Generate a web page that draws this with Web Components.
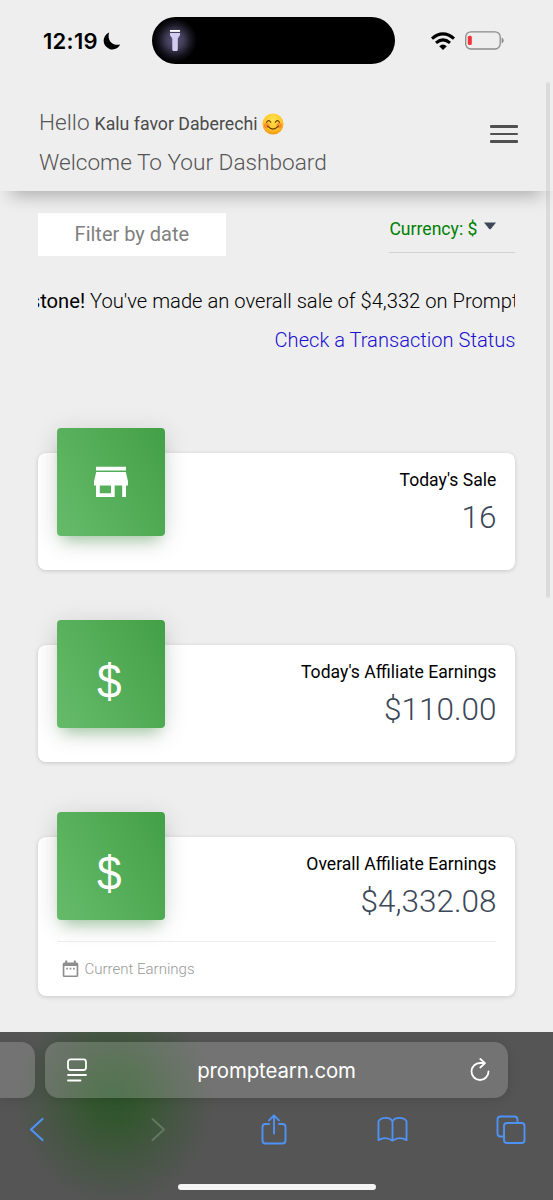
<!DOCTYPE html>
<html lang="en">
<head>
<meta charset="utf-8">
<title>Dashboard</title>
<style>
html,body{margin:0;background:#eee}
body{width:553px;height:1200px;overflow:hidden;font-family:Roboto,"Liberation Sans",sans-serif}
</style>
</head>
<body>
<dash-app></dash-app>
<script>
const define = (name, html) => {
  const t = document.createElement('template');
  t.innerHTML = html;
  customElements.define(name, class extends HTMLElement {
    constructor() {
      super();
      this.attachShadow({ mode: 'open' }).appendChild(t.content.cloneNode(true));
    }
  });
};

define('status-bar', `
<style>
:host{display:flex;box-sizing:border-box;height:82px;align-items:flex-start;padding:17px 49px 0 43px;justify-content:space-between}
.l{display:flex;align-items:center;height:47px;width:109px;gap:5px}
.t{font:600 22px Inter,sans-serif;letter-spacing:.3px;color:#000}
.island{width:243.500px;height:46.500px;border-radius:24px;background:radial-gradient(circle at 23px 23px,#5d5878 0,#403c55 9px,#17151f 16px,#000 22px);display:flex;align-items:center;box-sizing:border-box;padding-left:17px}
.r{display:flex;align-items:center;gap:9px;height:47px;width:109px;justify-content:flex-end}
svg{display:block}
</style>
<div class="l"><span class="t">12:19</span>
<svg width="18" height="18" viewBox="0 0 18 18"><path d="M6.2.6A8.700 8.700 0 1 0 17.200 12.500C10 14.400 3.500 8.500 6.200.6Z" fill="#000"/></svg></div>
<div class="island"><svg width="12" height="23" viewBox="0 0 12 23"><path d="M1 1h10v1.700H1zM1 4h10v2.200L8.800 9.600V20.500q0 1.500-1.400 1.500H4.700q-1.400 0-1.400-1.500V9.600L1 6.200Z" fill="#d2cbf3"/><rect x="1" y="1" width="10" height="1.700" fill="#fff"/></svg></div>
<div class="r">
<svg width="26" height="18" viewBox="0 0 26 18" fill="none" stroke="#000"><path d="M2 6.600Q13-2.700 24 6.600" stroke-width="3.100"/><path d="M6 10.900Q13 5 20 10.900" stroke-width="3.100"/><path d="M9.200 14.200Q13 11 16.800 14.200L13 18Z" fill="#000" stroke="none"/></svg>
<svg width="39" height="19" viewBox="0 0 39 19"><rect x=".7" y=".8" width="34.500" height="17.200" rx="5.200" fill="none" stroke="#8b8b8b" stroke-width="1.300"/><rect x="2.800" y="4.700" width="4" height="9.400" rx="1.500" fill="#f5333a"/><path d="M36.700 6.600q2 1 2 2.900t-2 2.900z" fill="#888"/></svg>
</div>`);

define('page-header', `
<style>
:host{display:flex;box-sizing:border-box;height:109px;justify-content:space-between;padding:20.600px 35px 0 39px;color:#555;position:relative;box-shadow:0 15px 17px -11px rgba(0,0,0,.29)}
.h{font-weight:300;font-size:22.640px;line-height:40px;white-space:nowrap}
.line{display:flex;align-items:baseline;height:40px}
.line b{font-weight:400;font-size:17.720px;margin:0 5px 0 5px;color:#4b4b4b}
.e{align-self:center;margin-top:2px}
svg{display:block}
.m{display:flex;flex-direction:column;gap:5.200px;padding-top:22.600px}
.m i{display:block;width:28px;height:2.400px;border-radius:1px;background:#505050}
</style>
<div class="h"><div class="line"><span>Hello</span><b>Kalu favor Daberechi</b>
<svg class="e" width="22" height="22" viewBox="0 0 22 22"><defs><radialGradient id="g" cx=".5" cy=".3" r=".75"><stop offset="0" stop-color="#ffe34f"/><stop offset=".6" stop-color="#ffc526"/><stop offset="1" stop-color="#ef8c0c"/></radialGradient></defs><circle cx="11" cy="11" r="10.500" fill="url(#g)"/><circle cx="4.800" cy="12.500" r="2.800" fill="#f4652d" opacity=".55"/><circle cx="17.200" cy="12.500" r="2.800" fill="#f4652d" opacity=".55"/><path d="M4.600 9.300Q6.600 5.800 8.700 9.300M13.300 9.300Q15.400 5.800 17.400 9.300M5.600 13.200Q11 18.900 16.400 13.200" fill="none" stroke="#6b3a0b" stroke-width="1.200" stroke-linecap="round"/></svg></div>
<div>Welcome To Your Dashboard</div></div>
<div class="m"><i></i><i></i><i></i></div>`);

define('filter-bar', `
<style>
:host{display:flex;justify-content:space-between;align-items:flex-start;height:43px}
.f{width:188.500px;height:43px;background:#fff;color:#808080;font-size:20px;line-height:42px;text-align:center}
.c{width:126px;height:40px;border-bottom:1.500px solid #d2d2d2;box-sizing:border-box;display:flex;gap:7px;color:#008000;font-size:17.600px;line-height:33px;white-space:nowrap}
svg{margin-top:9px}
</style>
<div class="f">Filter by date</div>
<div class="c"><span>Currency: $</span><svg width="12" height="8" viewBox="0 0 12 8"><path d="M0 .5h12L7 6.800q-1 1-2 0Z" fill="#3c4858"/></svg></div>`);

define('sale-notice', `
<style>
:host{display:block;font-weight:300;font-size:20.180px;color:#000}
.q{display:flex;justify-content:flex-end;overflow:hidden;white-space:nowrap;margin-top:29px;height:32px;line-height:32px}
.q span{margin-right:-3px}
b{font-weight:400}
a{display:block;text-align:right;margin-top:7px;line-height:32px;font-size:20.120px;color:#1a10d0}
</style>
<div class="q"><span><b>stone!</b> You've made an overall sale of $4,332 on Prompt</span></div>
<a>Check a Transaction Status</a>`);

define('stat-card', `
<style>
:host{display:block;box-sizing:border-box;height:117px;border-radius:8px;background:#fff;box-shadow:0 1px 4px rgba(0,0,0,.16);padding:0 19px}
:host([tall]){height:158.500px}
.top{display:flex;justify-content:space-between;height:104px}
.ic{width:108px;height:108px;margin-top:-25px;border-radius:4px;background:linear-gradient(60deg,#66bb6a,#43a047);box-shadow:0 5px 26px rgba(0,0,0,.14),0 10px 13px -6px rgba(76,175,80,.4);display:flex;align-items:center;justify-content:center;color:#fff}
.tx{text-align:right;padding-top:14px;white-space:nowrap}
.k{font-size:17.580px;line-height:27px;color:#000}
.v{font-size:31.500px;line-height:40px;font-weight:300;color:#3c4858;margin-top:4px}
.ft{display:none}
:host([tall]) .ft{display:flex;align-items:center;box-sizing:border-box;border-top:1.500px solid #eee;height:55px;gap:5.500px;padding-left:5.300px;color:#999;font-size:15.050px;font-weight:300}
</style>
<div class="top"><div class="ic"><slot name="icon"></slot></div>
<div class="tx"><div class="k"><slot name="label"></slot></div><div class="v"><slot name="value"></slot></div></div></div>
<div class="ft"><svg width="17" height="18" viewBox="0 0 17 18"><path d="M3.200.5h2v2h6.600v-2h2v2h.9q1.600 0 1.600 1.600v11.300q0 1.600-1.600 1.600H2.300Q.7 17 .7 15.400V4.100Q.7 2.500 2.300 2.500h.9ZM2.400 6v9.400h12.200V6ZM4.200 7.800h1.700v1.700H4.200zM7.600 7.800h1.700v1.700H7.600zM11 7.800h1.700v1.700H11z" fill="#8e8e8e" fill-rule="evenodd"/></svg><slot name="footer"></slot></div>`);

define('store-icon', `
<style>:host{display:block}svg{display:block}</style>
<svg width="36" height="32" viewBox="0 0 36 32"><path d="M3 .7h30v3.800H3zM3.200 6h29.600L35 15.500v4H33V31h-3.800V19.500h-7.500V31H3V19.500H1v-4ZM6.800 19.500V27.200H18V19.500Z" fill="#fff" fill-rule="evenodd"/></svg>`);

define('dollar-icon', `
<style>:host{display:block;font:400 48px/50px "Liberation Sans",Arial,sans-serif;color:#fff;padding-top:15px;margin-left:-2px;transform:scaleX(.92)}</style>$`);

define('browser-bar', `
<style>
:host{display:block;height:168px;box-sizing:border-box;padding-top:10px;background:radial-gradient(ellipse 100px 108px at 115px 66px,#2d552d 0,#34562f 24%,rgba(64,86,61,.8) 58%,rgba(84,84,84,0) 100%),#555}
.tabs{display:flex;gap:10px;height:56px}
.s,.u{background:rgba(255,255,255,.18);box-shadow:0 2px 12px rgba(0,0,0,.12)}
.s{width:35px;border-radius:0 14px 14px 0}
.u{width:463px;border-radius:14px;display:flex;box-sizing:border-box;align-items:center;justify-content:space-between;padding:0 18px 0 22px;color:#fff}
.u span{font:400 20.400px Inter,sans-serif;letter-spacing:-.1px;margin-right:4px}
.b{display:grid;grid-template-columns:121px 111px 115px 119px 30px;align-items:center;padding:0 0 0 30px;height:62px;stroke:#4f92f6;stroke-width:1.900;fill:none;stroke-linecap:round;stroke-linejoin:round}
.home{width:198px;height:6px;border-radius:3px;background:#f4f4f4;margin:24px auto 0}
svg{display:block;overflow:visible}
</style>
<div class="tabs"><div class="s"></div><div class="u">
<svg width="20" height="24" viewBox="0 0 20 24" fill="none" stroke="#fff" stroke-width="1.800" stroke-linecap="round"><rect x="1" y="1.400" width="18" height="10.600" rx="2.500"/><path d="M1 17h18M1 22.500h12.500"/></svg>
<span>promptearn.com</span>
<svg width="20" height="24" viewBox="0 0 20 24" fill="none" stroke="#fff" stroke-width="1.800" stroke-linecap="round" stroke-linejoin="round"><path d="M18.500 13.500A8.500 8.500 0 1 1 10 5h4.500M10.300 1l4.700 4.200-4.700 4.300"/></svg>
</div></div>
<div class="b">
<svg width="14" height="23" viewBox="0 0 14 23"><path d="M12.500 1 1 11.500 12.500 22" stroke-width="2.200"/></svg>
<svg width="14" height="23" viewBox="0 0 14 23"><path d="M1.500 1 13 11.500 1.500 22" stroke="#627861"/></svg>
<svg width="24" height="31" viewBox="1 0 24 31"><path d="M8 10H4.500Q1.500 10 1.500 13V26.500q0 3 3 3h17q3 0 3-3V13q0-3-3-3H18M13 19.500V1.500M8 6.300l5-5 5 5"/></svg>
<svg width="31" height="27" viewBox="0 0 32 27"><path d="M16 25V5.500Q14.500 1.500 9 1.500 3.500 1.500 1.500 5V24.500Q9 20 16 25M16 5.500Q17.500 1.500 23 1.500q5.500 0 7.500 3.500V24.500Q23 20 16 25"/></svg>
<svg width="30" height="29" viewBox="0 0 30 29"><path d="M7.500 21.500H4.500q-3 0-3-3V4.500q0-3 3-3h14q3 0 3 3V7.500"/><rect x="8" y="8" width="20.500" height="20" rx="3"/></svg>
</div>
<div class="home"></div>`);

define('dash-app', `
<style>
:host{display:flex;flex-direction:column;width:553px;height:1200px;position:relative;overflow:hidden;background:#eee}
main{padding:22px 37.600px 0;flex:1;min-height:0}
.cards{display:flex;flex-direction:column;gap:75px;margin-top:97px}
.sb{position:absolute;right:3px;top:82px;width:4px;height:516px;border-radius:2px;background:rgba(0,0,0,.08)}
</style>
<status-bar></status-bar>
<page-header></page-header>
<main>
<filter-bar></filter-bar>
<sale-notice></sale-notice>
<div class="cards">
<stat-card><store-icon slot="icon"></store-icon><span slot="label">Today's Sale</span><span slot="value">16</span></stat-card>
<stat-card><dollar-icon slot="icon"></dollar-icon><span slot="label">Today's Affiliate Earnings</span><span slot="value">$110.00</span></stat-card>
<stat-card tall><dollar-icon slot="icon"></dollar-icon><span slot="label">Overall Affiliate Earnings</span><span slot="value">$4,332.08</span><span slot="footer">Current Earnings</span></stat-card>
</div>
</main>
<browser-bar></browser-bar>
<div class="sb"></div>`);
</script>
</body>
</html>
